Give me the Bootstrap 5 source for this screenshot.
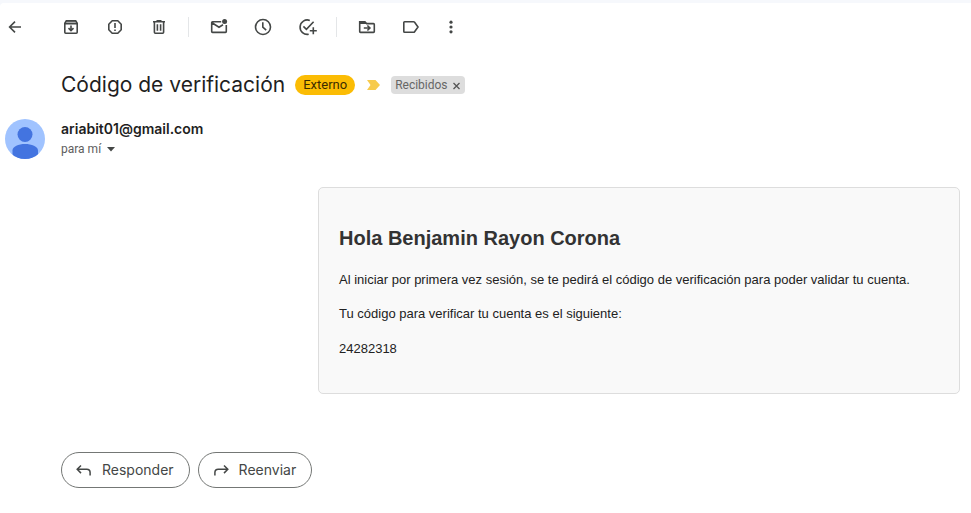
<!DOCTYPE html>
<html lang="es">
<head>
<meta charset="utf-8">
<meta name="viewport" content="width=device-width, initial-scale=1">
<title>Código de verificación</title>
<link href="https://cdn.jsdelivr.net/npm/bootstrap@5.3.0/dist/css/bootstrap.min.css" rel="stylesheet">
<style>
body { font-family: Roboto, sans-serif; font-size: 14px; line-height: 20px; color: #1f1f1f; background: #f6f8fc; }
.mail-pane { background: #fff; margin-top: 3px; padding: 14px 11px 24px 5px; min-height: calc(100vh - 3px); border-top-left-radius: 4px; }
.tool-group { gap: 24px; }
.tool-btn { width: 20px; height: 20px; padding: 0; border: 0; background: none; color: #444746; display: flex; }
.tool-rule { width: 1px; height: 20px; background: #e4e6e8; margin: 0 20px 0 19px; }
.tool-more { margin-left: 20px; }
.gutter { width: 56px; flex: none; }
.ico { width: 20px; height: 20px; fill: none; stroke: currentColor; stroke-width: 1.6; display: block; }
.ico .solid { fill: currentColor; stroke: none; }
.subject-row { margin: 34px 0 20px; }
.subject { font-family: Inter, sans-serif; font-size: 21px; line-height: 28px; font-weight: 400; margin: 0 10px 0 0; }
.tag-ext { background: #fbbc04; color: #3c2c00; font-size: 13px; line-height: 20px; padding: 0 8px; border-radius: 10px; }
.tag-box { background: #ddd; color: #666; font-size: 12px; line-height: 18px; padding: 0 4px; border-radius: 4px; }
.plain-btn { border: 0; background: none; padding: 0; color: inherit; line-height: inherit; }
.sender { font-family: Inter, sans-serif; font-size: 14px; line-height: 20px; font-weight: 600; margin: 0; }
.recipient { font-size: 12px; line-height: 20px; color: #5e5e5e; }
.message { width: 100%; max-width: 642px; background: #f9f9f9; border: 1px solid #ddd; border-radius: 5px; margin-top: 28px; padding: 20px; font-family: "Liberation Sans", Arial, sans-serif; font-size: 13px; color: #222; }
.message h2 { font-size: 20px; line-height: 24px; font-weight: 700; color: #333; margin: 18px 0 20px; }
.message p { line-height: 20px; margin: 0 0 14px; }
.message p:last-child { margin: 15px 0 14px; }
.actions { margin-top: 58px; }
.reply-btn { height: 36px; border: 1px solid #747775; border-radius: 18px; background: #fff; color: #444746; font-family: Inter, sans-serif; font-size: 14px; padding: 0 15px 0 12px; gap: 8px; }
.reply-btn .ico { stroke-width: 1.5; }
</style>
<script src="https://cdn.jsdelivr.net/npm/bootstrap@5.3.0/dist/js/bootstrap.bundle.min.js" defer></script>
</head>
<body>
<main class="mail-pane">
  <div class="d-flex align-items-center" role="toolbar" aria-label="Acciones">
    <div class="gutter"><button class="tool-btn" aria-label="Volver"><svg class="ico" viewBox="0 0 20 20"><path d="M16 10H5M10 4.6 4.6 10l5.4 5.4"/></svg></button></div>
    <div class="d-flex tool-group">
      <button class="tool-btn" aria-label="Archivar"><svg class="ico" viewBox="0 0 20 20"><path d="M3.8 6.3v9q0 .9.9.9h10.6q.9 0 .9-.9v-9l-1.5-2.4H5.3zM3.8 6.8h12.4M10 8.5v5M7.5 11.2l2.5 2.4 2.5-2.4"/><path d="M5.3 4h9.4l1.4 2.6H3.9z" fill="currentColor" fill-opacity=".45" stroke="none"/></svg></button>
      <button class="tool-btn" aria-label="Marcar como spam"><svg class="ico" viewBox="0 0 20 20"><path d="M7.2 3.8h5.6l3.4 3.4v5.6l-3.4 3.4H7.2l-3.4-3.4V7.2z" stroke-linejoin="round"/><path d="M10 6v5M10 12.4v1.7"/></svg></button>
      <button class="tool-btn" aria-label="Eliminar"><svg class="ico" viewBox="0 0 20 20"><path d="M4 4.8h12M7.5 3.8h5M5.4 5v10.3q0 .9.9.9h7.4q.9 0 .9-.9V5M8.4 7.2v6.6M11.6 7.2v6.6"/></svg></button>
    </div>
    <span class="tool-rule"></span>
    <div class="d-flex tool-group">
      <button class="tool-btn" aria-label="Marcar como no leído"><svg class="ico" viewBox="0 0 20 20"><path d="M12.2 4.8H3.5q-.8 0-.8.8v9q0 .8.8.8h13q.8 0 .8-.8V8M3 5.8l7 4.4 4-2.5"/><circle class="solid" cx="15.6" cy="4.6" r="2.5"/></svg></button>
      <button class="tool-btn" aria-label="Posponer"><svg class="ico" viewBox="0 0 20 20"><circle cx="10" cy="10" r="7.5"/><path d="M9.8 5.2v5l3.4 3"/></svg></button>
      <button class="tool-btn" aria-label="Añadir a Tasks"><svg class="ico" viewBox="0 0 20 20" overflow="visible"><path d="M12.8 3.4A7.2 7.2 0 1 0 11.7 17.2M6.4 9.4l3 3L16.6 4.8M16.3 10.2v7M12.8 13.7h7"/></svg></button>
    </div>
    <span class="tool-rule"></span>
    <div class="d-flex tool-group">
      <button class="tool-btn" aria-label="Mover a"><svg class="ico" viewBox="0 0 20 20"><path d="M2.7 4.8h5.2l1.7 1.8h6.9q.8 0 .8.8v7.2q0 .8-.8.8h-13q-.8 0-.8-.8zM6.8 11h5.6M10.4 8.5l2.5 2.5-2.5 2.5"/><path class="solid" d="M2.7 4.4h5.2l1.7 2.6H2.7z"/></svg></button>
      <button class="tool-btn" aria-label="Etiquetas"><svg class="ico" viewBox="0 0 20 20"><path d="M3.6 4.8h8.9q.7 0 1.1.5L17 10l-3.4 4.7q-.4.6-1.1.6H3.6q-.8 0-.8-.8v-9q0-.7.8-.7z"/></svg></button>
    </div>
    <button class="tool-btn tool-more" aria-label="Más"><svg class="ico" viewBox="0 0 20 20"><g class="solid"><circle cx="10" cy="5.2" r="1.6"/><circle cx="10" cy="10" r="1.6"/><circle cx="10" cy="14.8" r="1.6"/></g></svg></button>
  </div>

  <header class="subject-row d-flex align-items-center">
    <span class="gutter"></span>
    <h1 class="subject">Código de verificación</h1>
    <span class="tag-ext">Externo</span>
    <svg class="mx-2 flex-shrink-0" width="20" height="12" viewBox="0 0 20 12" role="img" aria-label="Importante"><path d="M4 1h8.5L17 6l-4.5 5H4l3.5-5z" fill="#f7cb4d"/></svg>
    <span class="tag-box d-flex align-items-center">Recibidos<button class="plain-btn ms-1" aria-label="Quitar etiqueta"><svg class="d-block" width="9" height="9" viewBox="0 0 9 9"><path d="m1.5 2 6 6m0-6-6 6" stroke="#555" stroke-width="1.3"/></svg></button></span>
  </header>

  <section class="d-flex align-items-start">
    <div class="gutter"><svg class="d-block" width="40" height="40" viewBox="0 0 40 40" role="img" aria-label="Foto de perfil"><defs><clipPath id="disc"><circle cx="20" cy="20" r="20"/></clipPath></defs><g clip-path="url(#disc)"><path fill="#a0c3ff" d="M0 0h40v40H0z"/><circle cx="20" cy="15.5" r="7.5" fill="#4374e0"/><path fill="#4374e0" d="M7.5 40v-8.5c0-4 6-6.500 12.500-6.500s13 2.500 13 6.500V40z"/></g></svg></div>
    <div>
      <h2 class="sender">ariabit01@gmail.com</h2>
      <button class="plain-btn recipient d-flex align-items-center">para mí<svg class="ms-1" width="12" height="6" viewBox="0 0 12 6"><path d="M2 1h8L6 5.5z" fill="#444746"/></svg></button>
    </div>
  </section>

  <article class="message ms-auto">
    <h2>Hola Benjamin Rayon Corona</h2>
    <p>Al iniciar por primera vez sesión, se te pedirá el código de verificación para poder validar tu cuenta.</p>
    <p>Tu código para verificar tu cuenta es el siguiente:</p>
    <p>24282318</p>
  </article>

  <footer class="actions d-flex">
    <span class="gutter"></span>
    <div class="d-flex gap-2">
      <button class="reply-btn d-flex align-items-center"><svg class="ico" viewBox="0 0 20 20"><path d="M7 5.5 3.2 9.3 7 13.1M3.5 9.3h9.3q3.300 0 3.300 3.300v3"/></svg>Responder</button>
      <button class="reply-btn d-flex align-items-center"><svg class="ico" viewBox="0 0 20 20"><path d="m13 5.5 3.8 3.8L13 13.1M16.5 9.3H7.200q-3.300 0-3.300 3.300v3"/></svg>Reenviar</button>
    </div>
  </footer>
</main>
</body>
</html>
